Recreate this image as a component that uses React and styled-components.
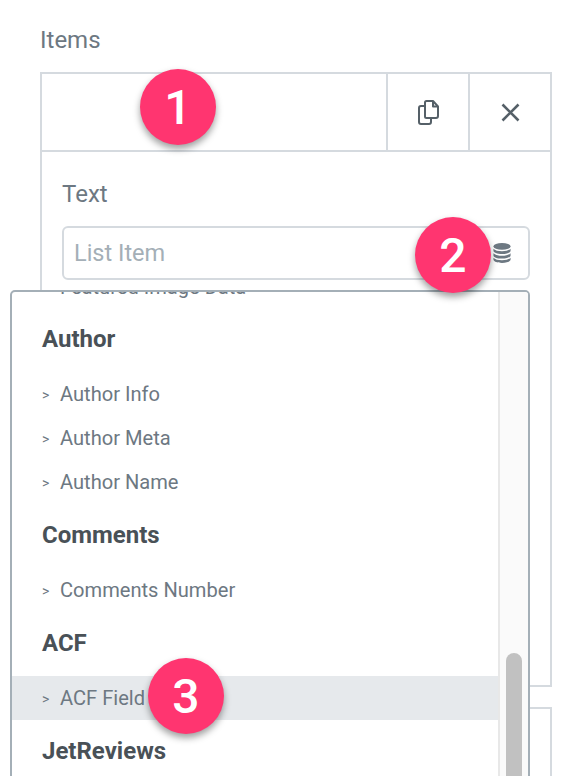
import React from "react";
import styled, { createGlobalStyle } from "styled-components";

const Global = createGlobalStyle`
  html, body { margin: 0; padding: 0; background: #fff; }
  body { font-family: Roboto, "Liberation Sans", sans-serif; }
`;

const Page = styled.div`
  width: 578px;
  height: 776px;
  overflow: hidden;
  padding: 26px 26px 0 40px;
  box-sizing: border-box;
`;

const SectionLabel = styled.div`
  font-size: 24px;
  line-height: 28px;
  color: #6d7882;
  margin-bottom: 18px;
`;

const Repeater = styled.div`
  border: 2px solid #d5dadf;
  height: 615px;
  box-sizing: border-box;
`;

const NextRepeater = styled(Repeater)`
  margin-top: 20px;
`;

const Header = styled.div`
  display: flex;
  height: 78px;
  border-bottom: 2px solid #d5dadf;
  box-sizing: border-box;
`;

const Title = styled.div`
  flex: 1;
  position: relative;
`;

const ToolButton = styled.div`
  width: 82px;
  border-left: 2px solid #d5dadf;
  box-sizing: border-box;
  display: flex;
  align-items: center;
  justify-content: center;
  color: #556068;
`;

const Body = styled.div`
  padding: 28px 20px 0;
`;

const FieldLabel = styled.div`
  font-size: 24px;
  line-height: 28px;
  color: #6d7882;
  margin-bottom: 18px;
`;

const InputBox = styled.div`
  position: relative;
  height: 54px;
  border: 2px solid #d5dadf;
  border-radius: 6px;
  box-sizing: border-box;
  display: flex;
  align-items: center;
  justify-content: space-between;
  padding: 0 17px 0 10px;
`;

const Placeholder = styled.span`
  font-size: 23.5px;
  color: #a4afb7;
`;

const Badge = styled.div`
  position: absolute;
  left: ${(p) => p.$x}px;
  top: ${(p) => p.$y}px;
  width: 76px;
  height: 76px;
  border-radius: 50%;
  background: #ff3570;
  box-shadow: 0 4px 7px rgba(0, 0, 0, 0.38);
  color: #fff;
  font-size: 48px;
  font-weight: 500;
  display: flex;
  align-items: center;
  justify-content: center;
  z-index: 5;
`;

const Dropdown = styled.div`
  position: absolute;
  left: -54px;
  top: 62px;
  width: 520px;
  height: 500px;
  box-sizing: border-box;
  background: #fff;
  border: 2px solid #a4afb7;
  border-radius: 5px;
  display: flex;
  overflow: hidden;
  z-index: 3;
`;

const List = styled.div`
  flex: 1;
  min-width: 0;
  margin-top: -19px;
`;

const ClippedRow = styled.div`
  font-size: 20.1px;
  line-height: 28px;
  color: #6d7882;
  padding-left: 48px;
  height: 28px;
`;

const GroupTitle = styled.div`
  font-size: 24px;
  font-weight: 700;
  color: #495157;
  line-height: 28px;
  padding-left: 30px;
  margin-top: ${(p) => p.$top}px;
  margin-bottom: 19px;
`;

const Row = styled.div`
  position: relative;
  display: flex;
  align-items: center;
  height: 44px;
  padding-left: 30px;
  font-size: 20.1px;
  color: #6d7882;
  background: ${(p) => (p.$active ? "#e6e9ec" : "transparent")};
`;

const Chevron = styled.span`
  font-size: 14px;
  width: 18px;
  padding-top: 2px;
`;

const Track = styled.div`
  width: 30px;
  flex: none;
  box-sizing: border-box;
  background: #fafafa;
  border-left: 2px solid #e8e8e8;
  padding: 361px 6px 0;
`;

const Thumb = styled.div`
  height: 200px;
  background: #c1c1c1;
  border-radius: 8px 8px 0 0;
`;

const CopyIcon = () => (
  <svg width="21" height="25" viewBox="0 0 21 25" fill="none" stroke="currentColor" strokeWidth="2" strokeLinejoin="round">
    <path d="M8.500 1h6.500l5 5.500V16a2 2 0 0 1-2 2H8.500a1.500 1.500 0 0 1-1.500-1.500v-14A1.500 1.500 0 0 1 8.500 1z" />
    <path d="M15 1v5.500h5" />
    <path d="M7 6H3a2 2 0 0 0-2 2v14a2 2 0 0 0 2 2h8a2 2 0 0 0 2-2v-4" />
  </svg>
);

const CloseIcon = () => (
  <svg width="19" height="19" viewBox="0 0 19 19" fill="none" stroke="currentColor" strokeWidth="2.6">
    <path d="M1.500 1.500l16 16M17.500 1.500l-16 16" />
  </svg>
);

const DbIcon = () => (
  <svg width="18" height="20" viewBox="0 0 18 21" fill="#6d7882">
    <ellipse cx="9" cy="3.600" rx="9" ry="3.600" />
    <path d="M0 6v2.200C0 10.200 4 11.600 9 11.600s9-1.400 9-3.400V6c-1.600 1.800-5 2.600-9 2.600S1.600 7.800 0 6z" />
    <path d="M0 10.800V13c0 2 4 3.400 9 3.400s9-1.400 9-3.400v-2.200c-1.600 1.800-5 2.600-9 2.600s-7.400-.8-9-2.600z" />
    <path d="M0 15.400v2C0 19.400 4 21 9 21s9-1.600 9-3.600v-2c-1.600 1.800-5 2.600-9 2.600s-7.400-.8-9-2.600z" />
  </svg>
);

const Item = ({ children, active, badge }) => (
  <Row $active={active}>
    <Chevron>&gt;</Chevron>
    {children}
    {badge}
  </Row>
);

export default function App() {
  return (
    <Page>
      <Global />
      <SectionLabel>Items</SectionLabel>
      <Repeater>
        <Header>
          <Title>
            <Badge $x={98} $y={-5}>1</Badge>
          </Title>
          <ToolButton><CopyIcon /></ToolButton>
          <ToolButton><CloseIcon /></ToolButton>
        </Header>
        <Body>
          <FieldLabel>Text</FieldLabel>
          <InputBox>
            <Placeholder>List Item</Placeholder>
            <DbIcon />
            <Badge $x={351} $y={-11}>2</Badge>
            <Dropdown>
              <List>
                <ClippedRow>Featured Image Data</ClippedRow>
                <GroupTitle $top={24}>Author</GroupTitle>
                <Item>Author Info</Item>
                <Item>Author Meta</Item>
                <Item>Author Name</Item>
                <GroupTitle $top={17}>Comments</GroupTitle>
                <Item>Comments Number</Item>
                <GroupTitle $top={17}>ACF</GroupTitle>
                <Item active badge={<Badge $x={136} $y={-18}>3</Badge>}>ACF Field</Item>
                <GroupTitle $top={17}>JetReviews</GroupTitle>
              </List>
              <Track><Thumb /></Track>
            </Dropdown>
          </InputBox>
        </Body>
      </Repeater>
      <NextRepeater />
    </Page>
  );
}
